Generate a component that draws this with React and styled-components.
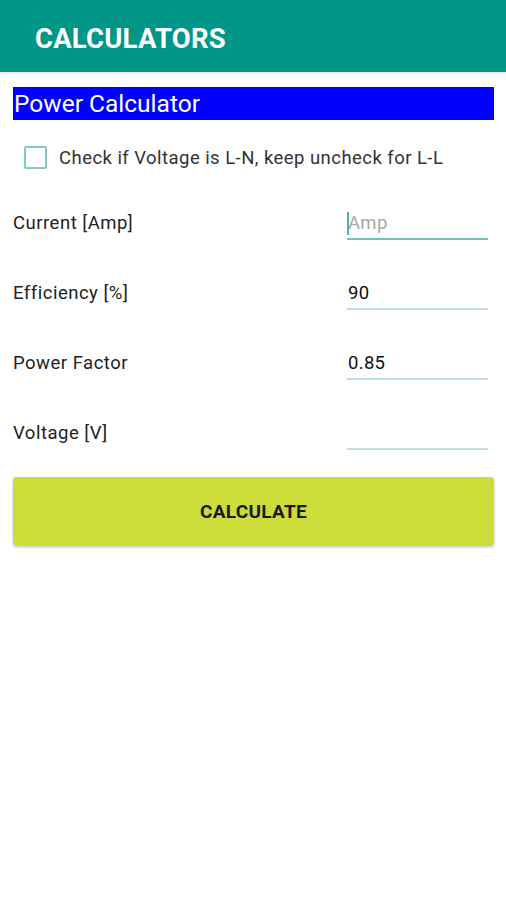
import React from 'react';
import styled, { createGlobalStyle } from 'styled-components';

const GlobalStyle = createGlobalStyle`
    html, body {
        margin: 0;
        padding: 0;
        background: #ffffff;
        font-family: Roboto, "Liberation Sans", Arial, sans-serif;
    }
    * { box-sizing: border-box; }
`;

const fields = [
    { label: 'Current [Amp]', value: '', placeholder: 'Amp', focused: true },
    { label: 'Efficiency [%]', value: '90' },
    { label: 'Power Factor', value: '0.85' },
    { label: 'Voltage [V]', value: '' },
];

const App = () => (
    <>
        <GlobalStyle />
        <Page>
            <AppBar>
                <AppTitle>CALCULATORS</AppTitle>
            </AppBar>

            <Content>
                <SectionTitle>Power Calculator</SectionTitle>

                <CheckRow>
                    <CheckBox />
                    <CheckLabel>Check if Voltage is L-N, keep uncheck for L-L</CheckLabel>
                </CheckRow>

                <Form>
                    {fields.map((f) => (
                        <FieldRow key={f.label}>
                            <FieldLabel>{f.label}</FieldLabel>
                            <FieldInput focused={f.focused}>
                                {f.focused && <Caret />}
                                {f.value ? <Value>{f.value}</Value> : <Placeholder>{f.placeholder}</Placeholder>}
                            </FieldInput>
                        </FieldRow>
                    ))}
                </Form>

                <CalcButton>CALCULATE</CalcButton>
            </Content>
        </Page>
    </>
);

const Page = styled.div`
    width: 506px;
    min-height: 900px;
    background: #ffffff;
`;

const AppBar = styled.header`
    height: 72px;
    background-color: #009688;
    display: flex;
    align-items: center;
    padding: 5px 35px 0;
    box-shadow: 0 1px 2px rgba(0, 0, 0, 0.15);
`;

const AppTitle = styled.h1`
    margin: 0;
    color: #ffffff;
    font-size: 27.5px;
    font-weight: 700;
    letter-spacing: 0.2px;
`;

const Content = styled.main`
    padding: 15px 12px 0 13px;
`;

const SectionTitle = styled.div`
    height: 33px;
    background-color: #0000ff;
    color: #ffffff;
    font-size: 24.5px;
    line-height: 34px;
    padding-left: 1px;
`;

const CheckRow = styled.label`
    display: flex;
    align-items: center;
    gap: 12px;
    margin: 26px 0 0 11px;
`;

const CheckBox = styled.span`
    width: 23px;
    height: 23px;
    border: 2px solid #80cbc4;
    border-radius: 2px;
`;

const CheckLabel = styled.span`
    font-size: 18.5px;
    letter-spacing: 0.45px;
    color: #333333;
`;

const Form = styled.div`
    display: flex;
    flex-direction: column;
    margin-top: 19px;
`;

const FieldRow = styled.div`
    display: flex;
    align-items: center;
    justify-content: space-between;
    height: 70px;
    padding-right: 6px;
`;

const FieldLabel = styled.span`
    font-size: 18.5px;
    letter-spacing: 0.5px;
    color: #222222;
`;

const FieldInput = styled.div`
    position: relative;
    width: 141px;
    height: 32px;
    display: flex;
    align-items: center;
    border-bottom: 2px solid ${(p) => (p.focused ? '#6fc3b9' : '#b9e2dd')};
    margin-top: 1px;
`;

const Caret = styled.span`
    position: absolute;
    left: 0;
    top: 4px;
    width: 2px;
    height: 23px;
    background: #4db6ac;
`;

const Value = styled.span`
    font-size: 18.5px;
    letter-spacing: 0.3px;
    color: #111111;
    padding-left: 1px;
`;

const Placeholder = styled.span`
    font-size: 18.5px;
    letter-spacing: 0.3px;
    color: #a8a8a8;
    padding-left: 1px;
`;

const CalcButton = styled.button`
    display: block;
    width: 481px;
    height: 68px;
    margin-top: 9px;
    border: none;
    border-radius: 3px;
    background-color: #cddc39;
    color: #1a1a1a;
    font-family: Roboto, "Liberation Sans", Arial, sans-serif;
    font-size: 19px;
    font-weight: 700;
    letter-spacing: 0.3px;
    box-shadow: 0 2px 3px rgba(0, 0, 0, 0.25);
    cursor: pointer;
`;

export default App;
